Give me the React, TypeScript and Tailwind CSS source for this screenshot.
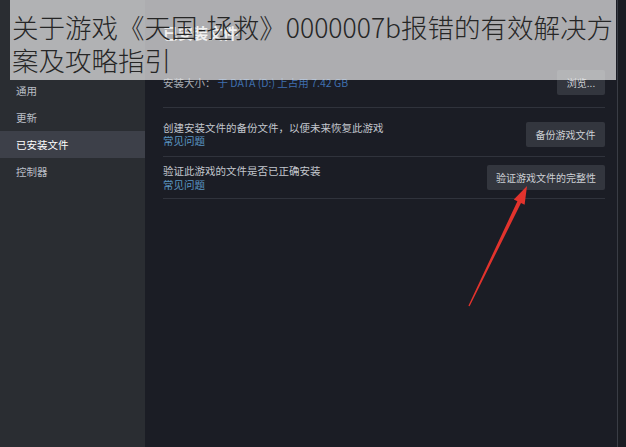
const sideItems = ['通用', '更新', '已安装文件', '控制器'];

function ActionButton({ label, className = '' }: { label: string; className?: string }) {
  return (
    <button
      className={`h-[25px] whitespace-nowrap rounded-[2px] bg-[#33363e] text-[10px] text-[#cdd0d5] ${className}`}
    >
      {label}
    </button>
  );
}

function Arrow() {
  return (
    <svg className="pointer-events-none absolute left-0 top-0" width="626" height="447" viewBox="0 0 626 447">
      <polygon
        points="527,186 524.6,204.8 521,203.1 469.6,306.2 468.4,305.8 517.4,201.3 513.8,199.6"
        fill="#e2332d"
      />
    </svg>
  );
}

export default function App() {
  return (
    <div className="relative flex h-[447px] w-[626px] overflow-hidden bg-[#1b1d25] font-['Noto_Sans_CJK_SC',sans-serif]">
      {/* sidebar */}
      <aside className="flex w-[145px] shrink-0 flex-col bg-[#2a2d32] pt-[77px]">
        {sideItems.map((item) => (
          <div
            key={item}
            className={`flex h-[27px] items-center pl-[16px] text-[10.5px] ${
              item === '已安装文件' ? 'bg-[#3d4049] text-white' : 'text-[#b9bdc5]'
            }`}
          >
            {item}
          </div>
        ))}
      </aside>

      {/* main panel */}
      <main className="flex w-[472px] shrink-0 flex-col bg-[#1b1d25] pl-[18px] pr-[12px] pt-[24px]">
        <h1 className="h-[18px] text-[15px] font-bold leading-[18px] text-white">已安装文件</h1>

        <div className="mt-[28px] flex h-[25px] items-center justify-between">
          <div className="text-[10.5px]">
            <span className="text-[#a9adb5]">安装大小：</span>
            <span className="ml-[2px] text-[#3f6fae]">于 DATA (D:) 上占用 7.42 GB</span>
          </div>
          <ActionButton label="浏览..." className="w-[48px]" />
        </div>

        <div className="mt-[12px] border-t border-[#30333c]" />

        <div className="flex h-[48px] items-center justify-between pt-[4px]">
          <div className="text-[10.5px] leading-[13.5px]">
            <div className="text-[#c3c7ce]">创建安装文件的备份文件，以便未来恢复此游戏</div>
            <div className="text-[#5a95c2]">常见问题</div>
          </div>
          <ActionButton label="备份游戏文件" className="w-[79px]" />
        </div>

        <div className="border-t border-[#30333c]" />

        <div className="flex h-[41px] items-center justify-between">
          <div className="text-[10.5px] leading-[13.5px]">
            <div className="text-[#c3c7ce]">验证此游戏的文件是否已正确安装</div>
            <div className="text-[#5a95c2]">常见问题</div>
          </div>
          <ActionButton label="验证游戏文件的完整性" className="w-[118px]" />
        </div>

        <div className="border-t border-[#30333c]" />
      </main>

      {/* right edge */}
      <div className="flex-1 border-l border-[#3a3d45] bg-[#1a1c22]" />

      <Arrow />

      {/* caption overlay */}
      <div className="absolute left-[10px] top-0 h-[80px] w-[606px] bg-[#ebebeb]/70 pl-[2px] pt-[10px] text-[26.5px] font-light leading-[33px] text-[#262626]">
        <div className="whitespace-nowrap">关于游戏《天国-拯救》0000007b报错的有效解决方</div>
        <div className="whitespace-nowrap">案及攻略指引</div>
      </div>
    </div>
  );
}
